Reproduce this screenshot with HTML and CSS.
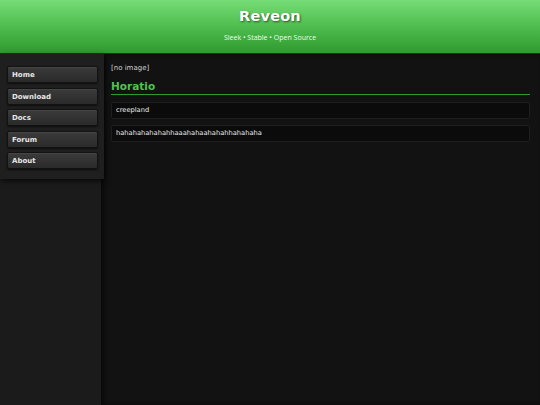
FILE: index.html
```html
<!DOCTYPE html>
<html>
<head>
<meta charset="utf-8">
<link rel="stylesheet" href="styles.css">
</head>
<body>
<header class="masthead">
  <h1 class="title">Reveon</h1>
  <p class="tagline">Sleek • Stable • Open Source</p>
</header>
<div class="layout">
  <aside class="side">
    <nav class="nav">
      <a class="nav-btn" href="#">Home</a>
      <a class="nav-btn" href="#">Download</a>
      <a class="nav-btn" href="#">Docs</a>
      <a class="nav-btn" href="#">Forum</a>
      <a class="nav-btn" href="#">About</a>
    </nav>
  </aside>
  <main class="main">
    <div class="noimg">[no image]</div>
    <h2 class="name">Horatio</h2>
    <div class="field">creepland</div>
    <div class="field">hahahahahahahhaaahahaahahahhahahaha</div>
  </main>
</div>
</body>
</html>
```
FILE: styles.css
```css
html, body { margin: 0; padding: 0; height: 100%; }
body {
  font-family: "DejaVu Sans", Verdana, sans-serif;
  background: #121212;
  color: #ddd;
  display: flex;
  flex-direction: column;
}
.masthead {
  height: 53px;
  background: linear-gradient(to bottom, #76dd76 0%, #52c052 45%, #2f9a2f 100%);
  border-bottom: 1px solid #0b3a30;
  text-align: center;
}
.title {
  margin: 0;
  padding-top: 7px;
  font-family: "DejaVu Sans", sans-serif;
  font-weight: bold;
  font-size: 14.5px;
  line-height: 18px;
  color: #fff;
  letter-spacing: 0.2px;
  text-shadow: 1px 1px 2px rgba(0,0,0,0.55);
}
.tagline {
  margin: 8px 0 0;
  font-family: "Open Sans", sans-serif;
  font-size: 7px;
  line-height: 9px;
  color: #eaffea;
}
.layout {
  flex: 1;
  display: flex;
}
.side {
  width: 101px;
  flex: none;
  background: #1b1b1b;
}
.nav {
  position: relative;
  z-index: 1;
  width: 104px;
  box-sizing: border-box;
  padding: 12px 6px 10px 7px;
  background: #1f1f1f;
  box-shadow: 1px 2px 5px rgba(0,0,0,0.7);
  display: flex;
  flex-direction: column;
  gap: 4.5px;
}
.nav-btn {
  display: block;
  height: 17px;
  width: 91px;
  box-sizing: border-box;
  line-height: 16px;
  padding-left: 4px;
  font-size: 7px;
  font-weight: bold;
  color: #e6e6e6;
  text-decoration: none;
  background: linear-gradient(to bottom, #3b3b3b, #2a2a2a);
  border: 1px solid #121212;
  border-radius: 2px;
  box-shadow: 0 1px 2px rgba(0,0,0,0.6), inset 0 1px 0 rgba(255,255,255,0.06);
}
.main {
  flex: 1;
  background: #121212;
  padding: 9px 10px 0 10px;
  box-shadow: inset 3px 0 4px rgba(0,0,0,0.5);
}
.noimg {
  font-size: 7px;
  line-height: 10px;
  color: #d0d0d0;
}
.name {
  margin: 6px 0 0;
  font-size: 10.5px;
  line-height: 14px;
  color: #4fc24f;
  padding-bottom: 1px;
  border-bottom: 1px solid #2e9a2e;
}
.field {
  margin-top: 7px;
  height: 17px;
  box-sizing: border-box;
  padding-left: 4px;
  line-height: 15px;
  font-size: 6.7px;
  color: #e8e8e8;
  background: #0b0b0b;
  border: 1px solid #1f1f1f;
  border-radius: 2px;
}
.field + .field { margin-top: 6px; }
```
